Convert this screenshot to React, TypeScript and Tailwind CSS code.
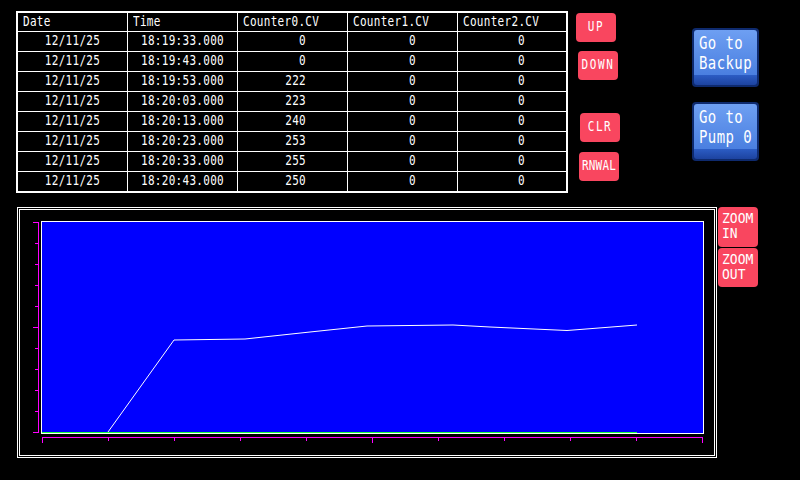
import React from "react";

const rows = [
  ["12/11/25", "18:19:33.000", "0", "0", "0"],
  ["12/11/25", "18:19:43.000", "0", "0", "0"],
  ["12/11/25", "18:19:53.000", "222", "0", "0"],
  ["12/11/25", "18:20:03.000", "223", "0", "0"],
  ["12/11/25", "18:20:13.000", "240", "0", "0"],
  ["12/11/25", "18:20:23.000", "253", "0", "0"],
  ["12/11/25", "18:20:33.000", "255", "0", "0"],
  ["12/11/25", "18:20:43.000", "250", "0", "0"],
];

const headers = ["Date", "Time", "Counter0.CV", "Counter1.CV", "Counter2.CV"];

// tall narrow "pixel" look for the HMI font
function T({ children }: { children: React.ReactNode }) {
  return <span className="inline-block scale-y-125">{children}</span>;
}

function RedBtn({ label, className }: { label: string; className: string }) {
  return (
    <div
      className={`w-[40px] h-[29px] rounded-[4px] bg-[#f9465f] text-white text-[11px] flex items-center justify-center ${className}`}
    >
      <T>{label}</T>
    </div>
  );
}

function BlueBtn({ l1, l2, className }: { l1: string; l2: string; className: string }) {
  return (
    <div className={`w-[67px] h-[59px] rounded-[4px] bg-[#0e2a6e] p-[2px] flex flex-col ${className}`}>
      <div className="flex-1 rounded-t-[3px] bg-gradient-to-b from-[#6e9ff2] to-[#4a7fe0] px-[5px] pt-[3px] text-white text-[14px] leading-[20px] tracking-[0.4px]">
        <div><T>{l1}</T></div>
        <div><T>{l2}</T></div>
      </div>
      <div className="h-[10px] bg-gradient-to-b from-[#2c5cc4] to-[#1d43a0] rounded-b-[3px]" />
    </div>
  );
}

function ZoomBtn({ l2, className }: { l2: string; className: string }) {
  return (
    <div className={`w-[40px] rounded-[4px] bg-[#f9465f] text-white text-[13px] leading-[15px] pl-[4px] pt-[4px] ${className}`}>
      <div><span className="inline-block scale-y-110">ZOOM</span></div>
      <div><span className="inline-block scale-y-110">{l2}</span></div>
    </div>
  );
}

function Chart() {
  const yTicks = Array.from({ length: 11 }, (_, i) => i);
  const xTicks = Array.from({ length: 11 }, (_, i) => i);
  return (
    <svg width="694" height="245" shapeRendering="crispEdges">
      <rect x="21.5" y="11.5" width="662" height="212" fill="#0000ff" stroke="#ffffff" strokeWidth="1" />
      {/* y axis */}
      <line x1="18.5" y1="12" x2="18.5" y2="223" stroke="#ff00ff" />
      {yTicks.map((i) => (
        <line
          key={"y" + i}
          x1={i % 5 === 0 ? 13 : 15}
          x2="19"
          y1={12.5 + i * 21}
          y2={12.5 + i * 21}
          stroke="#ff00ff"
        />
      ))}
      {/* x axis */}
      <line x1="22" y1="227.5" x2="683" y2="227.5" stroke="#ff00ff" />
      {xTicks.map((i) => (
        <line
          key={"x" + i}
          x1={22.5 + i * 66}
          x2={22.5 + i * 66}
          y1="227"
          y2={i % 5 === 0 ? 233 : 231}
          stroke="#ff00ff"
        />
      ))}
      <polyline
        points="88,222 154,130 225,129 290,122 347,116 433,115 470,117 547,120.5 617,115"
        fill="none"
        stroke="#ffffff"
        strokeWidth="1"
        shapeRendering="auto"
      />
      <line x1="22" y1="222.5" x2="617" y2="222.5" stroke="#1cff3c" />
    </svg>
  );
}

export default function App() {
  return (
    <div className="w-[800px] h-[480px] bg-black overflow-hidden text-white font-['DejaVu_Sans_Mono',monospace]">
      <div className="flex pt-[11px] pl-[16px]">
        {/* log table */}
        <div className="w-[552px] border-2 border-white text-[11px] tracking-[0.3px]">
          <div className="grid grid-cols-[110px_110px_110px_110px_108px] h-[19px] border-b border-white">
            {headers.map((h, i) => (
              <div key={h} className={`pl-[5px] flex items-center ${i < 4 ? "border-r border-white" : ""}`}>
                <T>{h}</T>
              </div>
            ))}
          </div>
          {rows.map((r, ri) => (
            <div
              key={ri}
              className={`grid grid-cols-[110px_110px_110px_110px_108px] ${ri < 7 ? "h-[20px] border-b border-white" : "h-[19px]"}`}
            >
              {r.map((c, ci) => (
                <div
                  key={ci}
                  className={`flex items-center ${ci < 2 ? "justify-center" : "justify-end pr-[41px]"} ${ci < 4 ? "border-r border-white" : ""}`}
                >
                  <T>{c}</T>
                </div>
              ))}
            </div>
          ))}
        </div>

        {/* red command buttons */}
        <div className="w-[44px] ml-[8px] pt-[2px] flex flex-col">
          <RedBtn label="UP" className="tracking-[1.6px]" />
          <RedBtn label="DOWN" className="ml-[2px] mt-[9px] tracking-[1.6px]" />
          <RedBtn label="CLR" className="ml-[4px] mt-[33px] tracking-[1.6px]" />
          <RedBtn label="RNWAL" className="ml-[3px] mt-[10px] tracking-[0.2px]" />
        </div>

        {/* screen navigation */}
        <div className="ml-[72px] pt-[17px] flex flex-col">
          <BlueBtn l1="Go to" l2="Backup" className="" />
          <BlueBtn l1="Go to" l2="Pump 0" className="mt-[15px]" />
        </div>
      </div>

      <div className="flex pl-[17px] mt-[14px]">
        <div className="w-[700px] h-[251px] border-[3px] border-double border-white">
          <Chart />
        </div>
        <div className="ml-[1px] flex flex-col">
          <ZoomBtn l2="IN" className="h-[40px]" />
          <ZoomBtn l2="OUT" className="h-[39px] mt-[1px]" />
        </div>
      </div>
    </div>
  );
}
